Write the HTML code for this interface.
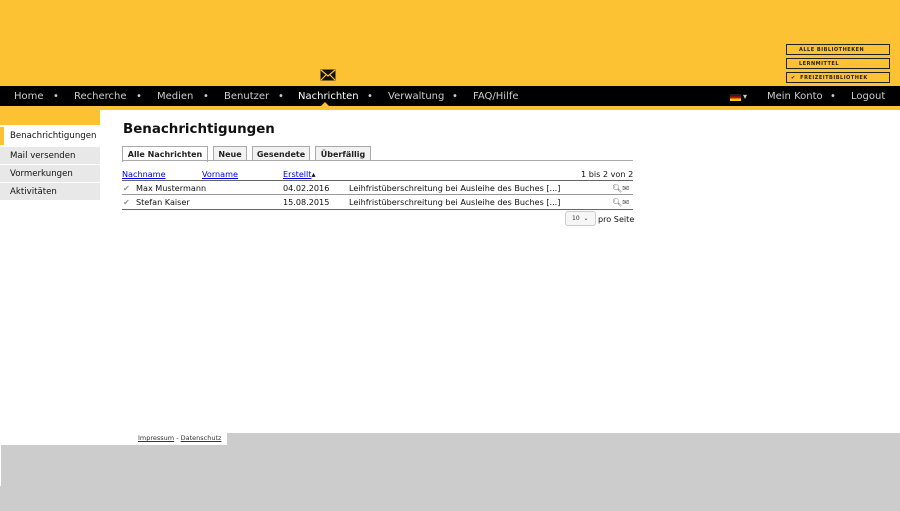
<!DOCTYPE html>
<html><head><meta charset="utf-8"><style>
*{margin:0;padding:0;box-sizing:border-box}
body{width:900px;height:511px;background:#fff;font-family:"DejaVu Sans","Liberation Sans",sans-serif;position:relative;overflow:hidden}
.hdr{position:absolute;left:0;top:0;width:900px;height:86px;background:#fdc134}
.nav{position:absolute;left:0;top:86px;width:900px;height:20px;background:#000;color:#ccc;font-size:10px}
.nav span{position:absolute;top:5px}
.strip{position:absolute;left:0;top:106px;width:900px;height:4px;background:#fdc134}
.sidecol{position:absolute;left:0;top:106px;width:100px;height:19px;background:#fdc134}
.side div{position:absolute;left:0;width:100px;height:17px;background:#e8e8e8;font-size:8.6px;color:#111;padding:4px 0 0 10px}
.lib{position:absolute;left:786px;width:104px;height:11px;border:1px solid #222;font-size:5px;font-weight:bold;color:#222;padding:2px 0 0 12px;letter-spacing:.5px}
h1{position:absolute;left:123px;top:122px;font-size:13.4px;font-weight:bold;color:#111}
.tab{position:absolute;top:146px;height:15px;border:1px solid #aaa;border-bottom:none;background:#f2f2f2;font-size:8px;font-weight:bold;padding-top:2px;text-align:center;color:#222}
.t{position:absolute;font-size:8.1px;color:#111}
a{color:#00e;text-decoration:underline}
.line{position:absolute;left:122px;width:511px;height:1px;background:#666}
</style></head><body>
<div class="hdr"></div>
<div class="lib" style="top:44px">ALLE BIBLIOTHEKEN</div>
<div class="lib" style="top:58px">LERNMITTEL</div>
<div class="lib" style="top:72px;padding-left:4px">✔&nbsp; FREIZEITBIBLIOTHEK</div>
<svg style="position:absolute;left:320px;top:69px" width="16" height="12"><rect x=".5" y=".5" width="15" height="11" fill="#111"/><path d="M1 1L8 7L15 1M1 11L6 6M15 11L10 6" stroke="#fdc134" stroke-width="1.2" fill="none"/></svg>
<div class="nav">
<span style="left:14px">Home</span><span style="left:53px">•</span>
<span style="left:74px">Recherche</span><span style="left:136px">•</span>
<span style="left:157px">Medien</span><span style="left:203px">•</span>
<span style="left:224px">Benutzer</span><span style="left:278px">•</span>
<span style="left:298px;color:#fff">Nachrichten</span><span style="left:367px">•</span>
<span style="left:388px">Verwaltung</span><span style="left:452px">•</span>
<span style="left:473px">FAQ/Hilfe</span>
<span style="left:730px;top:8px;width:11px;height:7px;background:linear-gradient(#222 33%,#d00 33%,#d00 66%,#fc0 66%)"></span><span style="left:743px;top:6px;font-size:8px">▾</span>
<span style="left:767px">Mein Konto</span><span style="left:830px">•</span>
<span style="left:851px">Logout</span>
</div>
<div style="position:absolute;left:321px;top:102px;width:0;height:0;border:4px solid transparent;border-bottom-color:#fdc134;border-top:0"></div>
<div class="strip"></div><div class="sidecol"></div>
<div class="side">
<div style="top:127px;height:18px;background:#fff;border-left:4px solid #fdc134;padding-left:6px">Benachrichtigungen</div>
<div style="top:147px">Mail versenden</div>
<div style="top:165px">Vormerkungen</div>
<div style="top:183px">Aktivitäten</div>
</div>
<h1>Benachrichtigungen</h1>
<div class="tab" style="left:122px;width:86px;background:#fff;height:16px;padding-top:3px">Alle Nachrichten</div>
<div class="tab" style="left:213px;width:34px;padding-top:3px">Neue</div>
<div class="tab" style="left:252px;width:58px;padding-top:3px">Gesendete</div>
<div class="tab" style="left:315px;width:56px;padding-top:3px">Überfällig</div>
<div class="line" style="top:160px;background:#aaa"></div>
<div class="t" style="left:122px;top:169px"><a>Nachname</a></div>
<div class="t" style="left:202px;top:169px"><a>Vorname</a></div>
<div class="t" style="left:283px;top:169px"><a>Erstellt</a>▴</div>
<div class="t" style="left:581px;top:169px">1 bis 2 von 2</div>
<div class="line" style="top:180px"></div>
<div class="t" style="left:123px;top:183px;color:#999">✔</div>
<div class="t" style="left:136px;top:183px">Max Mustermann</div>
<div class="t" style="left:283px;top:183px">04.02.2016</div>
<div class="t" style="left:349px;top:183px">Leihfristüberschreitung bei Ausleihe des Buches [...]</div>
<div class="t" style="left:612px;top:183px;color:#555">🔍︎✉︎</div>
<div class="line" style="top:194px;background:#999"></div>
<div class="t" style="left:123px;top:197px;color:#999">✔</div>
<div class="t" style="left:136px;top:197px">Stefan Kaiser</div>
<div class="t" style="left:283px;top:197px">15.08.2015</div>
<div class="t" style="left:349px;top:197px">Leihfristüberschreitung bei Ausleihe des Buches [...]</div>
<div class="t" style="left:612px;top:197px;color:#555">🔍︎✉︎</div>
<div class="line" style="top:209px"></div>
<div style="position:absolute;left:565px;top:211px;width:31px;height:15px;border:1px solid #ccc;border-radius:3px;background:#f6f6f6;font-size:6px;padding:3px 0 0 6px;color:#333">10 &nbsp;⌄</div>
<div class="t" style="left:598px;top:214px">pro Seite</div>
<div style="position:absolute;left:227px;top:433px;width:673px;height:12px;background:#ccc"></div>
<div style="position:absolute;left:1px;top:445px;width:899px;height:41px;background:#ccc"></div>
<div style="position:absolute;left:0;top:486px;width:900px;height:25px;background:#ccc"></div>
<div style="position:absolute;left:138px;top:434px;font-size:6.5px;color:#333"><span style="text-decoration:underline">Impressum</span> - <span style="text-decoration:underline">Datenschutz</span></div>
</body></html>
